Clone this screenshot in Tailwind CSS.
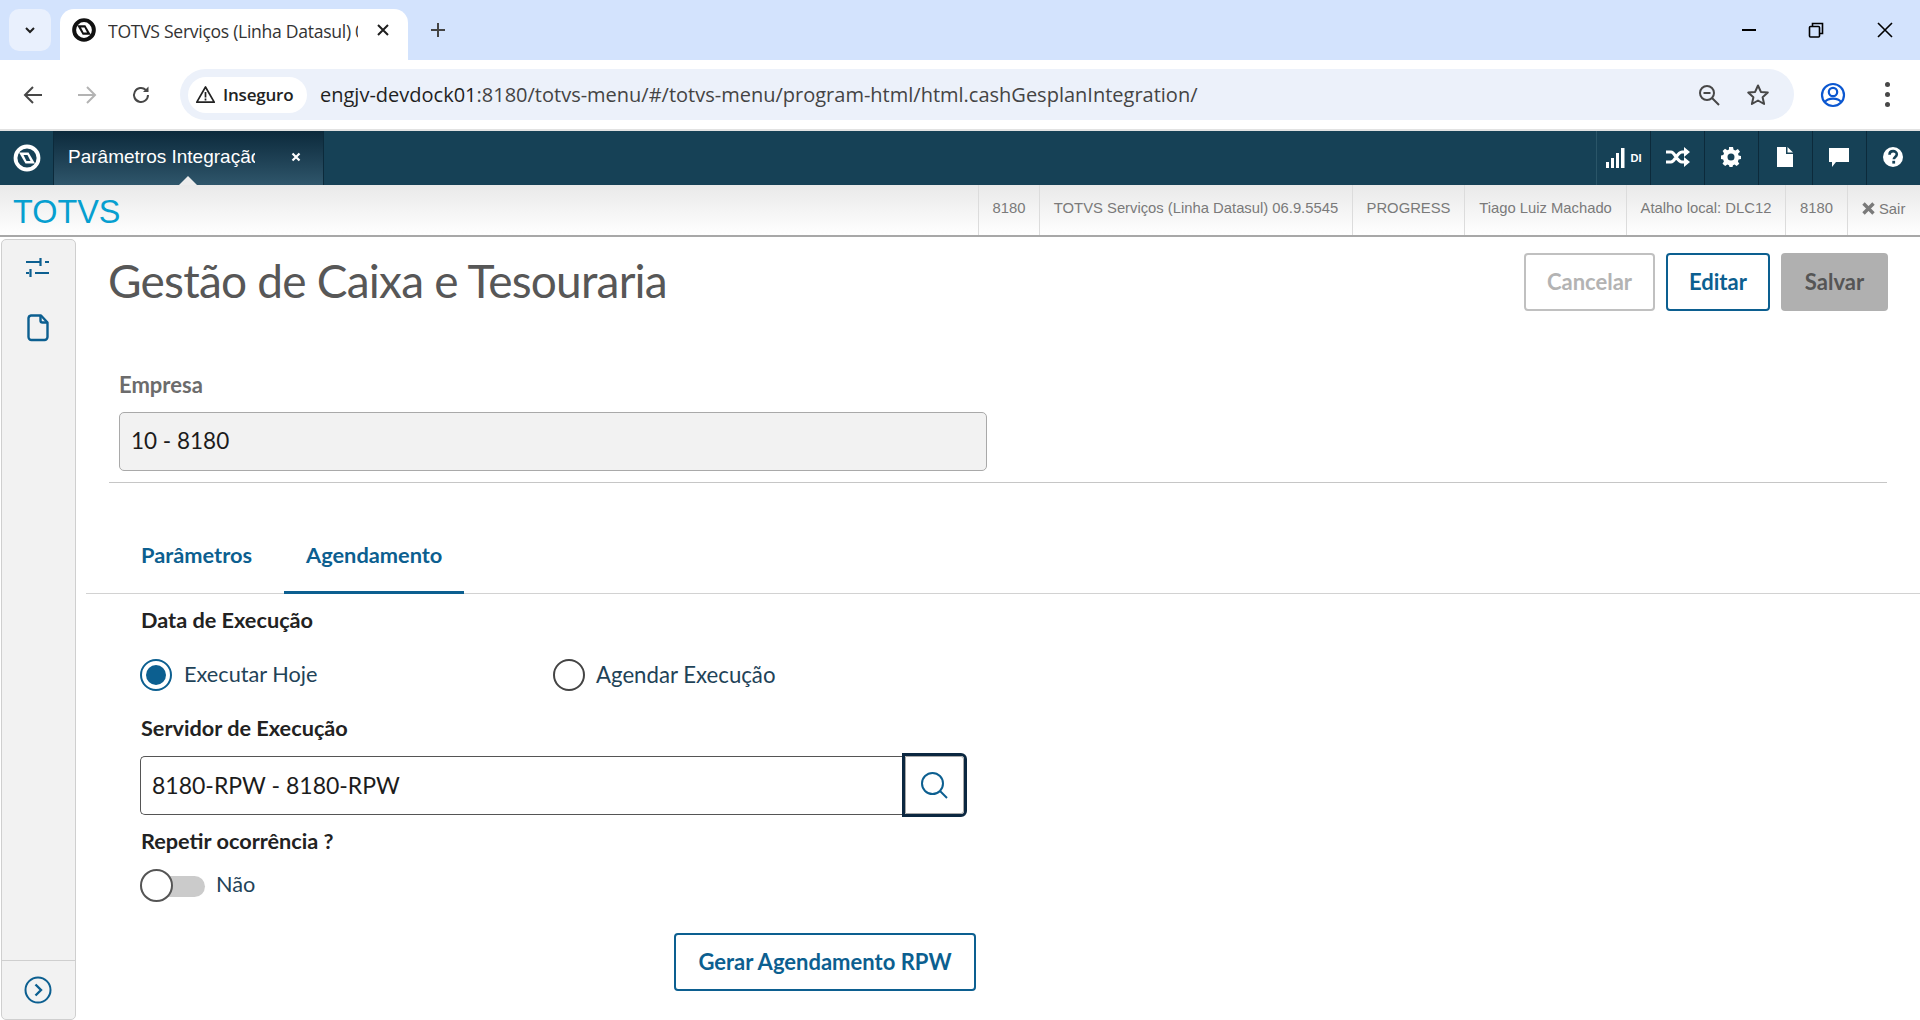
<!DOCTYPE html>
<html lang="pt-BR">
<head>
<meta charset="utf-8">
<title>TOTVS Serviços</title>
<script src="https://cdn.jsdelivr.net/npm/@tailwindcss/browser@4"></script>
</head>
<body class="m-0 bg-white">
<div class="w-[1920px] h-[1020px] overflow-hidden flex flex-col bg-white font-['Lato','Noto_Sans',sans-serif]">

  <!-- Browser tab strip -->
  <div class="h-[60px] shrink-0 bg-[#d3e3fd] flex items-end pl-[9px] relative font-['Open_Sans',sans-serif]">
    <div class="w-[42px] h-[42px] mb-[9px] rounded-[10px] bg-[#e9f0fd] flex items-center justify-center">
      <svg width="14" height="14" viewBox="0 0 14 14" fill="none" stroke="#1f1f1f" stroke-width="2"><path d="M3 5l4 4 4-4"/></svg>
    </div>
    <div class="ml-[9px] w-[348px] h-[51px] bg-white rounded-t-[14px] flex items-center pl-[12px] pb-[9px]">
      <svg width="24" height="24" viewBox="0 0 28 28"><circle cx="14" cy="14" r="11.500" fill="none" stroke="#111" stroke-width="4.600"/><path d="M6 8.500h9.500l6.500 11h-9.500z" fill="#111"/><path d="M10.500 11h4l3 6h-4z" fill="#fff"/></svg>
      <span class="ml-[12px] mt-[2px] w-[250px] overflow-hidden whitespace-nowrap text-[17.6px] text-[#333] font-['Open_Sans',sans-serif] tracking-[-0.3px]">TOTVS Serviços (Linha Datasul) 06.9.5545</span>
      <svg class="ml-[18px]" width="14" height="14" viewBox="0 0 14 14" stroke="#1f1f1f" stroke-width="2"><path d="M2 2l10 10M12 2L2 12"/></svg>
    </div>
    <svg class="ml-[22px] mb-[22px]" width="16" height="16" viewBox="0 0 16 16" stroke="#444" stroke-width="2"><path d="M8 1v14M1 8h14"/></svg>
    <div class="ml-auto flex items-center h-[60px]">
      <svg width="16" height="16" viewBox="0 0 16 16" stroke="#000" stroke-width="2"><path d="M1 8h14"/></svg>
      <svg class="ml-[51px]" width="16" height="16" viewBox="0 0 16 16" fill="none" stroke="#000" stroke-width="1.6"><rect x="1.5" y="4.5" width="10" height="10.5" rx="1"/><path d="M4.5 4V1.5h10v10H12"/></svg>
      <svg class="ml-[53px] mr-[27px]" width="16" height="16" viewBox="0 0 16 16" stroke="#000" stroke-width="1.6"><path d="M1 1l14 14M15 1L1 15"/></svg>
    </div>
  </div>

  <!-- Browser toolbar -->
  <div class="h-[69px] shrink-0 bg-white flex items-center relative rounded-t-[12px] font-['Open_Sans',sans-serif]">
    <div class="w-[180px] flex items-center pl-[23px]">
      <svg width="20" height="20" viewBox="0 0 20 20" fill="none" stroke="#474747" stroke-width="2"><path d="M19 10H2M10 2l-8 8 8 8"/></svg>
      <svg class="ml-[34px]" width="20" height="20" viewBox="0 0 20 20" fill="none" stroke="#b3b3b3" stroke-width="2"><path d="M1 10h17M10 2l8 8-8 8"/></svg>
      <svg class="ml-[34px]" width="20" height="20" viewBox="0 0 20 20" fill="none" stroke="#474747" stroke-width="2"><path d="M17 10a7 7 0 1 1-2.2-5.1"/><path d="M17.5 1.5v5.5h-5.5z" fill="#474747" stroke="none"/></svg>
    </div>
    <div class="w-[1614px] h-[51px] rounded-full bg-[#ecf1fa] flex items-center pl-[8px] pr-[24px]">
      <div class="w-[119px] h-[36px] rounded-full bg-white flex items-center pl-[7px]">
        <svg width="21" height="19" viewBox="0 0 21 19" fill="none" stroke="#222" stroke-width="1.7"><path d="M10.5 2L1.8 17.2h17.4z" stroke-linejoin="round"/><path d="M10.5 7v5.5M10.5 13.6v1.8"/></svg>
        <span class="ml-[7px] text-[17px] font-semibold text-[#222] tracking-[-0.2px]">Inseguro</span>
      </div>
      <span class="ml-[13px] text-[20px] text-[#444] whitespace-nowrap"><span class="text-[#1f1f1f]">engjv-devdock01</span>:8180/totvs-menu/#/totvs-menu/program-html/html.cashGesplanIntegration/</span>
      <svg class="ml-auto" width="24" height="24" viewBox="0 0 24 24" fill="none" stroke="#474747" stroke-width="2"><circle cx="10" cy="10" r="7"/><path d="M15 15l7 7M6.5 10h7"/></svg>
      <svg class="ml-[25px]" width="24" height="24" viewBox="0 0 24 24" fill="none" stroke="#474747" stroke-width="2" stroke-linejoin="round"><path d="M12 2.5l2.9 6.4 6.9.7-5.2 4.6 1.5 6.8-6.1-3.5-6.1 3.5 1.5-6.8L2.200 9.600l6.900-.7z"/></svg>
    </div>
    <svg class="ml-[26px]" width="26" height="28" viewBox="0 0 26 28" fill="none" stroke="#0b57d0" stroke-width="2.200"><circle cx="13" cy="14" r="11"/><circle cx="13" cy="11" r="4.200"/><path d="M5 21c3-4.500 13-4.500 16 0"/></svg>
    <div class="ml-[39px] flex flex-col gap-[5px]">
      <span class="w-[5px] h-[5px] rounded-full bg-[#474747]"></span>
      <span class="w-[5px] h-[5px] rounded-full bg-[#474747]"></span>
      <span class="w-[5px] h-[5px] rounded-full bg-[#474747]"></span>
    </div>
  </div>
  <div class="h-[3px] shrink-0 bg-[#e2e2e2]"></div>

  <!-- App header -->
  <div class="h-[54px] shrink-0 -mt-px bg-[#164156] flex items-stretch font-['Liberation_Sans',sans-serif]">
    <div class="w-[54px] flex items-center justify-center border-r border-[#0c2a3b]">
      <svg width="28" height="28" viewBox="0 0 28 28"><circle cx="14" cy="14" r="11.500" fill="none" stroke="#fff" stroke-width="3.800"/><path d="M6 8.500h9.500l6.500 11h-9.500z" fill="#fff"/><path d="M10.500 11h4l3 6h-4z" fill="#164156"/></svg>
    </div>
    <div class="w-[270px] relative flex items-center pl-[14px] pb-[2px] bg-gradient-to-b from-[#0c2a3c] to-[#2f566b] border-r border-[#0c2a3b]">
      <span class="w-[187px] overflow-hidden whitespace-nowrap text-[19px] text-white">Parâmetros Integração</span>
      <svg class="ml-[36px]" width="10" height="10" viewBox="0 0 10 10" stroke="#fff" stroke-width="2.200"><path d="M1.500 1.500l7 7M8.500 1.500l-7 7"/></svg>
      <span class="absolute bottom-0 left-[125px] w-0 h-0 border-l-[9px] border-r-[9px] border-b-[9px] border-l-transparent border-r-transparent border-b-[#ececec]"></span>
    </div>
    <div class="ml-auto flex">
      <div class="w-[54px] border-l border-[#2a5568] flex items-center justify-center gap-[6px]">
        <svg width="19" height="20" viewBox="0 0 19 20" fill="#fff"><rect x="0" y="14" width="3" height="6"/><rect x="5" y="10" width="3" height="10"/><rect x="10" y="5" width="3" height="15"/><rect x="15" y="0" width="3.500" height="20"/></svg>
        <span class="text-[11px] font-bold text-white">DI</span>
      </div>
      <div class="w-[54px] border-l border-[#0c2a3b] flex items-center justify-center pb-[2px]">
        <svg width="24" height="20" viewBox="0 0 24 20" fill="none" stroke="#fff" stroke-width="3.200"><path d="M0 5h5c4 0 6 10 11 10h3M0 15h5c4 0 6-10 11-10h3"/><path d="M18 0l6 5-6 5zM18 10l6 5-6 5z" fill="#fff" stroke="none"/></svg>
      </div>
      <div class="w-[54px] border-l border-[#0c2a3b] flex items-center justify-center pr-[2px] pb-[2px]">
        <svg width="20" height="20" viewBox="0 0 20 20" fill="#fff"><path fill-rule="evenodd" d="M8 0h4l.6 2.800 1.800.8L16.900 2l2.100 2.800-2 2 .6 1.700L20 9v3l-2.400.6-.7 1.800 1.400 2.400L15.600 19l-2-1.400-1.600.6L11.500 20h-3L8 18.200l-1.700-.7L4.200 19 1.500 16.800l1.400-2.300-.7-1.900L0 12V8.500l2.300-.4.700-1.800L1.600 4 4 1.700l2.300 1.500L8 2.600zM10 6.500a3.500 3.500 0 1 0 0 7 3.500 3.500 0 0 0 0-7z"/></svg>
      </div>
      <div class="w-[54px] border-l border-[#0c2a3b] flex items-center justify-center pr-[2px] pb-[2px]">
        <svg width="16" height="20" viewBox="0 0 16 20" fill="#fff"><path d="M0 0h9v7h7v13H0z"/><path d="M10.500 0L16 5.500h-5.500z"/></svg>
      </div>
      <div class="w-[54px] border-l border-[#0c2a3b] flex items-center justify-center pr-[2px] pb-[2px]">
        <svg width="20" height="19" viewBox="0 0 20 19" fill="#fff"><path d="M0 0h20v14H7l-4 5v-5H0z"/></svg>
      </div>
      <div class="w-[54px] border-l border-[#0c2a3b] flex items-center justify-center pr-[2px] pb-[2px]">
        <svg width="20" height="20" viewBox="0 0 20 20"><circle cx="10" cy="10" r="10" fill="#fff"/><path d="M6.500 7.800c0-5 7.300-4.700 7.300-.5 0 2.600-3 2.700-3 5" fill="none" stroke="#164156" stroke-width="2.600"/><rect x="9.300" y="13.800" width="2.800" height="2.800" fill="#164156"/></svg>
      </div>
    </div>
  </div>

  <!-- Sub header -->
  <div class="h-[52px] shrink-0 bg-gradient-to-b from-[#e9e9e9] to-white border-b-2 border-[#a8a8a8] flex items-stretch font-['Liberation_Sans',sans-serif]">
    <span class="pl-[13px] text-[32.4px] leading-[50px] h-[50px] mt-[2px] text-[#069fd0]">TOTVS</span>
    <div class="ml-auto flex text-[14.8px] text-[#7a7a7a] h-[50px]">
      <div class="w-[61px] border-l border-[#dcdcdc] pt-[12px] text-center">8180</div>
      <div class="w-[313px] border-l border-[#dcdcdc] pt-[12px] text-center">TOTVS Serviços (Linha Datasul) 06.9.5545</div>
      <div class="w-[112px] border-l border-[#dcdcdc] pt-[12px] text-center">PROGRESS</div>
      <div class="w-[162px] border-l border-[#dcdcdc] pt-[12px] text-center">Tiago Luiz Machado</div>
      <div class="w-[159px] border-l border-[#dcdcdc] pt-[12px] text-center">Atalho local: DLC12</div>
      <div class="w-[62px] border-l border-[#dcdcdc] pt-[12px] text-center">8180</div>
      <div class="w-[73px] border-l border-[#dcdcdc] pt-[13px] pl-[14px] flex items-start gap-[4px]">
        <svg class="mt-[4px]" width="13" height="13" viewBox="0 0 13 13" stroke="#7a7a7a" stroke-width="3.400"><path d="M1.500 1.500l10 10M11.500 1.500l-10 10"/></svg>
        <span>Sair</span>
      </div>
    </div>
  </div>

  <!-- Body -->
  <div class="flex-1 min-h-0 flex items-stretch">
    <!-- Sidebar -->
    <aside class="ml-px mr-px mt-[2px] w-[75px] shrink-0 bg-[#f2f2f2] border border-[#cfcfcf] rounded-[5px] flex flex-col items-center pr-[2px]">
      <svg class="mt-[17px]" width="26" height="20" viewBox="0 0 26 20" fill="none" stroke="#0c5f90" stroke-width="2.200"><path d="M1 5h14M20 5h4M15.500 1v8M1 16h3M10 16h14M5.500 12v8"/></svg>
      <svg class="mt-[37px]" width="22" height="28" viewBox="0 0 22 28" fill="none" stroke="#0c5f90" stroke-width="2.400" stroke-linejoin="round"><path d="M4 1.500h10l6.500 7V23a3 3 0 0 1-3 3H4.500a3 3 0 0 1-3-3V4a3 3 0 0 1 2.500-2.500z"/><path d="M13.500 1.500v5a2 2 0 0 0 2 2h5"/></svg>
      <div class="mt-auto -mr-[2px] pr-[2px] w-[calc(100%+2px)] h-[59px] border-t border-[#cfcfcf] flex items-center justify-center">
        <svg width="28" height="28" viewBox="0 0 28 28" fill="none" stroke="#0c5f90" stroke-width="2"><circle cx="14" cy="14" r="12.500"/><path d="M11.500 8.500l5.500 5.500-5.500 5.500" stroke-width="2.400"/></svg>
      </div>
    </aside>

    <!-- Content -->
    <main class="flex-1 min-w-0 pt-[16px]">
      <div class="ml-[31px] mr-[32px] flex items-center justify-between h-[58px]">
        <h1 class="pb-[2px] text-[46px] font-normal text-[#575757] leading-none tracking-[-0.78px]">Gestão de Caixa e Tesouraria</h1>
        <div class="flex gap-[11px] text-[22px] font-bold">
          <button class="w-[131px] h-[58px] pb-[2px] rounded-[4px] border-2 border-[#c0c0c0] bg-white text-[#b3b3b3]">Cancelar</button>
          <button class="w-[104px] h-[58px] pb-[2px] rounded-[4px] border-2 border-[#0c5f90] bg-white text-[#0c5f90]">Editar</button>
          <button class="w-[107px] h-[58px] pb-[2px] rounded-[4px] bg-[#b0b0b0] text-[#555]">Salvar</button>
        </div>
      </div>

      <div class="ml-[42px] mt-[61px] h-[26px] leading-[26px] text-[22px] font-bold text-[#6c6c6c]">Empresa</div>
      <div class="ml-[42px] mt-[14px] w-[868px] h-[59px] rounded-[5px] border border-[#a9a9a9] bg-[#f2f2f2] flex items-center pl-[11px] pb-[2px] text-[22.5px] text-[#1c1c1c]">10 - 8180</div>
      <div class="ml-[32px] mr-[33px] mt-[11px] h-[1px] bg-[#c6c6c6]"></div>

      <div class="ml-[9px] mt-[36px] h-[75px] border-b border-[#d2d2d2] flex pl-[55px] text-[21.8px] font-bold text-[#0c5f90]">
        <div class="w-[143px] h-[75px] pt-[23px] leading-[26px]">Parâmetros</div>
        <div class="w-[180px] h-[75px] pt-[23px] leading-[26px] pl-[22px] border-b-[3px] border-[#0c5f90]">Agendamento</div>
      </div>

      <div class="ml-[64px] mt-[14px] h-[26px] leading-[24px] text-[21.7px] font-bold text-[#222]">Data de Execução</div>

      <div class="ml-[63px] mt-[25px] h-[32px] flex items-center text-[21.7px] text-[#1f4358]">
        <span class="w-[32px] h-[32px] rounded-full border-2 border-[#0c5f90] flex items-center justify-center">
          <span class="w-[20px] h-[20px] rounded-full bg-[#0c5f90]"></span>
        </span>
        <span class="ml-[12px] w-[369px] pb-[2px]">Executar Hoje</span>
        <span class="w-[32px] h-[32px] rounded-full border-2 border-[#444]"></span>
        <span class="ml-[11px] pb-[1px] text-[22.2px]">Agendar Execução</span>
      </div>

      <div class="ml-[64px] mt-[25px] h-[26px] leading-[24px] text-[21.7px] font-bold text-[#222]">Servidor de Execução</div>

      <div class="ml-[63px] mt-[11px] flex items-center h-[64px]">
        <div class="w-[762px] h-[59px] border border-[#555] border-r-0 rounded-l-[5px] flex items-center pl-[11px] text-[23px] text-[#1c1c1c]">8180-RPW - 8180-RPW</div>
        <button class="w-[65px] h-[64px] rounded-r-[6px] border-[3px] border-[#0b2740] bg-white flex items-center justify-center">
          <span class="w-full h-full rounded-r-[3px] border border-[#a8a8a8] flex items-center justify-center pr-[2px]">
            <svg width="28" height="28" viewBox="0 0 28 28" fill="none" stroke="#0c5f90" stroke-width="2"><circle cx="12.500" cy="12.500" r="10.500"/><path d="M20 20l7 7"/></svg>
          </span>
        </button>
      </div>

      <div class="ml-[64px] mt-[12px] h-[26px] leading-[24px] text-[21.7px] font-bold text-[#222]">Repetir ocorrência ?</div>

      <div class="ml-[63px] mt-[14px] h-[34px] flex items-center">
        <span class="relative w-[65px] h-[21px] rounded-full bg-[#cbcbcb]">
          <span class="absolute left-0 top-[-6.500px] w-[33px] h-[33px] rounded-full border-[2px] border-[#555] bg-white"></span>
        </span>
        <span class="ml-[11px] mb-[4px] text-[21.7px] text-[#1f4358]">Não</span>
      </div>

      <div class="ml-[597px] mt-[30px]">
        <button class="w-[302px] h-[58px] pb-[1px] rounded-[4px] border-2 border-[#0c5f90] bg-white text-[22px] font-bold text-[#0c5f90]">Gerar Agendamento RPW</button>
      </div>
    </main>
  </div>
</div>
</body>
</html>
